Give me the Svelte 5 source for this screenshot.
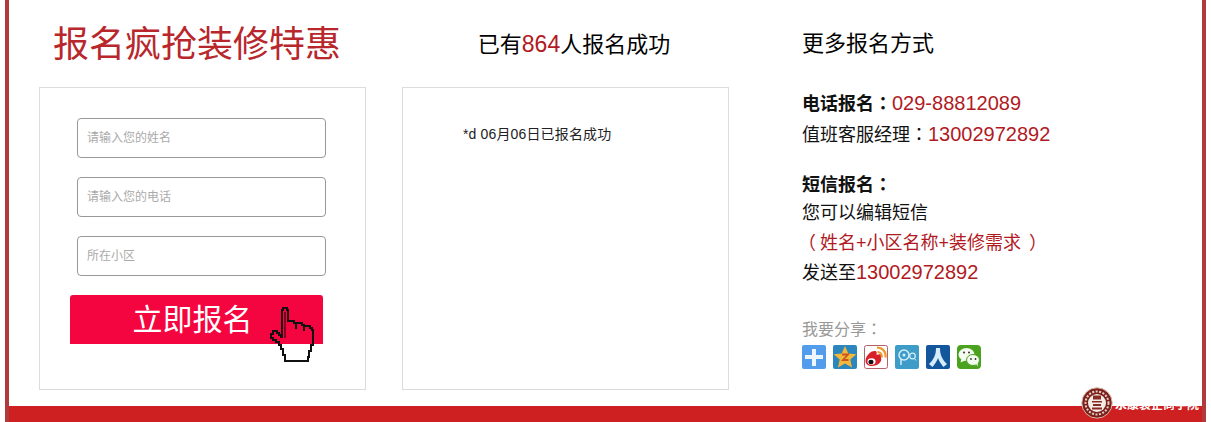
<script lang="ts">
	const fields = ['请输入您的姓名', '请输入您的电话', '所在小区'];
</script>

<div class="frame">
	<main class="columns">
		<section class="col-form">
			<h1>报名疯抢装修特惠</h1>
			<div class="box form-box">
				{#each fields as field}
					<div class="field">{field}</div>
				{/each}
				<div class="submit-wrap">
					<button class="submit">立即报名</button>
					<svg class="hand" viewBox="0 0 48 62" width="48" height="62" fill="none" stroke="#111" stroke-width="2" shape-rendering="crispEdges">
						<path d="M14 34V6H15V4H19V6H20V17H26V19H28V25M28 19H34V21H36V27M36 22H42V24H44V26H45V41H43V47H41V53H40V57H17V51H15V45H13V41H11V38H8V36H5V34H3V30H5V27H9V29H11V31H13V34" />
						<path d="M17 34V8" stroke="#8a0022" />
					</svg>
				</div>
			</div>
		</section>

		<section class="col-list">
			<h2>已有<em class="count">864</em>人报名成功</h2>
			<div class="box list-box">
				<p>*d 06月06日已报名成功</p>
			</div>
		</section>

		<aside class="col-more">
			<h2>更多报名方式</h2>
			<div class="block phone">
				<p><b>电话报名<span class="mark">：</span></b><em class="num">029-88812089</em></p>
				<p>值班客服经理<span class="mark">：</span><em class="num">13002972892</em></p>
			</div>
			<div class="block">
				<p><b>短信报名<span class="mark">：</span></b></p>
				<p>您可以编辑短信</p>
				<p><em><span class="paren-l">（</span>姓名+小区名称+装修需求<span class="paren-r">）</span></em></p>
				<p>发送至<em class="num">13002972892</em></p>
			</div>
			<div class="share">
				<span class="share-label">我要分享<span class="mark">：</span></span>
				<div class="icons">
					<svg viewBox="0 0 24 24"><rect width="24" height="24" rx="2" fill="#529ceb"/><path d="M10 4h4v6h7v4h-7v7h-4v-7H3v-4h7z" fill="#eef6fd"/></svg>
					<svg viewBox="0 0 24 24"><rect width="24" height="24" rx="2" fill="#2a86bd"/><path d="M12 1l3.300 7.500 8 .8-6 5.300 1.700 7.900-7-4-7 4 1.700-7.900-6-5.300 8-.8z" fill="#f3b73a"/><path d="M9 9.500h6l-5 5.500h5.500" fill="none" stroke="#c9561c" stroke-width="1.800"/></svg>
					<svg viewBox="0 0 24 24"><rect x=".5" y=".5" width="23" height="23" rx="2" fill="#fff" stroke="#b5606a"/><path d="M1.500 16c0-5 5-10 9-10 2.500 0 2.500 2 2 4 3.500-1.500 6-.5 4.500 3 1.500 3.500-3 8-9 8-3.500 0-6.500-2-6.500-5z" fill="#d8202a"/><ellipse cx="7.500" cy="16.500" rx="4" ry="3.200" fill="#fff"/><ellipse cx="7" cy="17" rx="2.600" ry="2.200" fill="#111"/><path d="M13 2.500c5.500 0 9.500 4.500 8.500 10M13.500 7c3 0 5 2.500 4.200 5.500" fill="none" stroke="#ee9a2e" stroke-width="2.200"/></svg>
					<svg viewBox="0 0 24 24"><rect width="24" height="24" rx="2" fill="#3d9cc8"/><circle cx="9" cy="10" r="5" fill="none" stroke="#d4eef8" stroke-width="1.500"/><circle cx="9" cy="10" r="1.500" fill="#d4eef8"/><path d="M6 14v6" stroke="#d4eef8" stroke-width="1.500"/><circle cx="17.500" cy="11" r="2.800" fill="none" stroke="#d4eef8" stroke-width="1.200"/><path d="M19.500 13.500l1.500 2" stroke="#d4eef8"/></svg>
					<svg viewBox="0 0 24 24"><rect width="24" height="24" rx="2" fill="#14569c"/><path d="M10 3h4c0 7 2 11 7 16l-3.500 3c-2.500-3-4.500-6-5.500-9-1 3-3 6-5.500 9L3 19c5-5 7-9 7-16z" fill="#d5ecfb"/></svg>
					<svg viewBox="0 0 24 24"><rect width="24" height="24" rx="4" fill="#4ba21e"/><ellipse cx="9.500" cy="9.500" rx="8" ry="6.500" fill="#f4fbef"/><path d="M4.500 13.500l-1 4 4.500-2z" fill="#f4fbef"/><ellipse cx="16" cy="15" rx="6.500" ry="5.500" fill="#f4fbef" stroke="#4ba21e"/><path d="M19 19l2 2.500-.5-4z" fill="#f4fbef"/><circle cx="7" cy="7.500" r="1" fill="#333"/><circle cx="12" cy="7.500" r="1" fill="#333"/><circle cx="14" cy="14" r=".9" fill="#333"/><circle cx="18.500" cy="14" r=".9" fill="#333"/></svg>
				</div>
			</div>
		</aside>
	</main>
	<footer class="bottom"></footer>

	<div class="badge">
		<svg viewBox="0 0 32 32" width="32" height="32">
			<circle cx="16" cy="16" r="15.200" fill="#7b1f1c" stroke="#d8b8a8" stroke-width="1"/>
			<circle cx="16" cy="16" r="11.500" fill="none" stroke="#e6cfc0" stroke-width="2" stroke-dasharray="2 1.500"/>
			<circle cx="16" cy="16" r="9" fill="#f3ece6"/>
			<path d="M12 8.500h8v4h-8zM11 14h10v1.500H11zM12 17h8v2h-8zM11 20.500h10v2H11z" fill="#8a2a24"/>
		</svg>
		<span>永康装企商学院</span>
	</div>
</div>

<style>
	:global(body) {
		background: #fff;
		font-family: "Liberation Sans", "Noto Sans CJK SC", sans-serif;
	}

	.frame {
		position: relative;
		box-sizing: border-box;
		width: 1201px;
		height: 422px;
		margin-left: 5px;
		border: solid #b13a3c;
		border-width: 0 4px;
		display: flex;
		flex-direction: column;
		overflow: hidden;
	}

	.columns {
		flex: 1;
		display: flex;
		padding-left: 30px;
	}

	h1 {
		margin: 21px 0 0;
		padding-left: 14px;
		height: 66px;
		color: #b8272c;
		font-size: 36px;
		font-weight: normal;
		line-height: 48px;
	}

	h2 {
		margin: 31px 0 0;
		height: 56px;
		color: #000;
		font-size: 22px;
		font-weight: normal;
		line-height: 26px;
	}

	em {
		font-style: normal;
		color: #b11a1f;
	}

	.mark {
		font-family: "Noto Sans CJK TC", sans-serif;
	}

	.paren-l {
		margin: 0 4px 0 -4px;
	}

	.paren-r {
		margin-left: 8px;
	}

	.box {
		box-sizing: border-box;
		width: 327px;
		height: 303px;
		border: 1px solid #dcdcdc;
	}

	.col-form {
		width: 327px;
		margin-right: 36px;
	}

	.form-box {
		padding: 30px 0 0 37px;
	}

	.field {
		box-sizing: border-box;
		width: 249px;
		height: 40px;
		margin-bottom: 19px;
		padding-left: 9px;
		border: 1px solid #999;
		border-radius: 4px;
		color: #aaa;
		font-size: 12px;
		line-height: 38px;
	}

	.submit-wrap {
		position: relative;
		margin: 0 0 0 -7px;
	}

	.submit {
		display: block;
		box-sizing: border-box;
		width: 253px;
		height: 49px;
		padding: 0 8px 0 0;
		border: none;
		border-radius: 3px 3px 0 0;
		background: #f5053f;
		color: #fff;
		font-family: inherit;
		font-size: 30px;
		line-height: 48px;
	}

	.hand {
		position: absolute;
		left: 198px;
		top: 9px;
	}

	.col-list {
		width: 327px;
		margin-right: 73px;
		text-align: center;
	}

	.col-list h2 {
		padding-left: 17px;
	}

	.count {
		font-size: 23px;
	}

	.list-box {
		padding: 38px 0 0 60px;
		text-align: left;
	}

	.list-box p {
		margin: 0;
		color: #222;
		font-size: 14px;
		line-height: 16px;
		letter-spacing: .15px;
	}

	.col-more {
		color: #111;
		font-size: 18px;
		line-height: 30px;
	}

	.num {
		font-size: 20px;
		line-height: 1;
	}

	.block {
		margin-bottom: 19px;
	}

	.block p {
		height: 30px;
		margin: 0;
	}

	.phone p {
		height: 31px;
	}

	.share-label {
		display: block;
		margin-top: 29px;
		color: #999;
		font-size: 16px;
		line-height: 22px;
	}

	.icons {
		display: flex;
		gap: 7px;
		margin-top: 4px;
	}

	.icons svg {
		width: 24px;
		height: 24px;
	}

	.bottom {
		height: 16px;
		margin: 0 -4px;
		background: #ce2020;
	}

	.badge {
		position: absolute;
		left: 1072px;
		bottom: 3px;
		display: flex;
		align-items: center;
		gap: 2px;
		color: #fff;
		font-size: 12px;
		font-weight: bold;
	}
</style>
